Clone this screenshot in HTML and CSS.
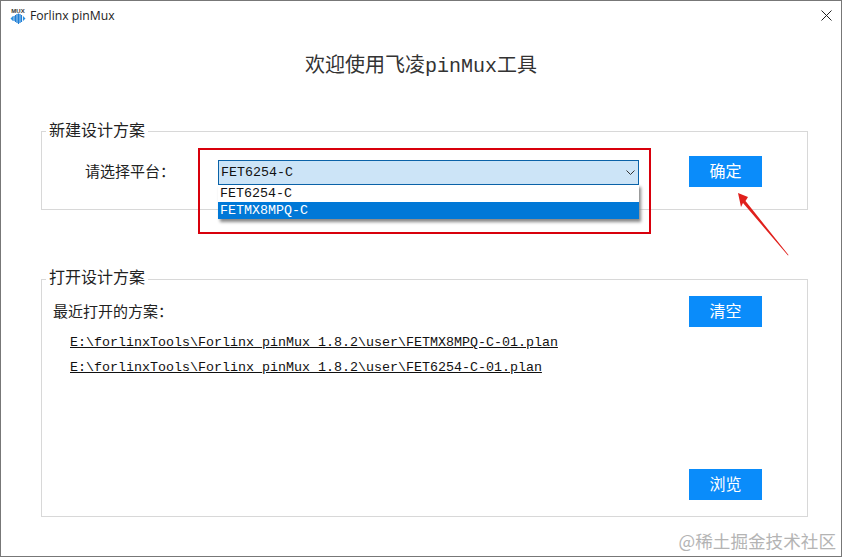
FILE: index.html
```html
<!DOCTYPE html>
<html lang="zh-CN">
<head>
    <meta charset="UTF-8">
    <meta name="viewport" content="width=device-width, initial-scale=1.0">
    <title>Forlinx pinMux</title>
    <link rel="stylesheet" href="styles.css">
</head>
<body>
    <div class="window">
        <div class="titlebar">
            <svg class="app-icon" width="16" height="17" viewBox="0 0 16 17">
                <text x="8" y="5.5" text-anchor="middle" class="app-icon-text">MUX</text>
                <path d="M0.5 11.5 L3 9 V14 Z M15.5 11.5 L13 9 V14 Z" fill="#2a8fe0"/>
                <path d="M4 9 V14 M5.5 8 V15 M7 7 V16 M8.5 6.5 V17 M10 7 V16 M11.5 8 V15" stroke="#1f7fd6" stroke-width="1.2"/>
            </svg>
            <span class="app-name">Forlinx pinMux</span>
            <svg class="close-icon" width="11" height="11" viewBox="0 0 11 11">
                <path d="M0.5 0.5 L10.5 10.5 M10.5 0.5 L0.5 10.5" stroke="#222" stroke-width="1"/>
            </svg>
        </div>

        <h1 class="heading">欢迎使用飞凌pinMux工具</h1>

        <div class="group new-plan">
            <div class="group-title">新建设计方案</div>
            <div class="label platform-label">请选择平台：</div>
            <div class="combo">
                <span>FET6254-C</span>
                <svg width="9" height="5" viewBox="0 0 9 5">
                    <path d="M0.5 0.5 L4.5 4.5 L8.5 0.5" fill="none" stroke="#333" stroke-width="1"/>
                </svg>
                <div class="combo-list">
                    <div class="combo-item">FET6254-C</div>
                    <div class="combo-item selected">FETMX8MPQ-C</div>
                </div>
            </div>
            <div class="btn">确定</div>
        </div>

        <div class="group open-plan">
            <div class="group-title">打开设计方案</div>
            <div class="open-header">
                <div class="label">最近打开的方案：</div>
                <div class="btn">清空</div>
            </div>
            <div class="recent-list">
                <a class="recent-link">E:\forlinxTools\Forlinx_pinMux_1.8.2\user\FETMX8MPQ-C-01.plan</a>
                <a class="recent-link">E:\forlinxTools\Forlinx_pinMux_1.8.2\user\FET6254-C-01.plan</a>
            </div>
            <div class="btn browse">浏览</div>
        </div>

        <!-- annotations drawn on top of the screenshot -->
        <div class="red-frame"></div>
        <svg class="red-arrow" width="60" height="72" viewBox="0 0 60 72">
            <path d="M4 5 L14 9 L11.5 13 L54.5 67 L54 67.5 L9 15 L7 19 Z" fill="#e0201c"/>
        </svg>
        <div class="watermark">@稀土掘金技术社区</div>
    </div>
</body>
</html>
```

FILE: styles.css
```css
html, body {
    margin: 0;
    height: 100%;
    background-color: white;
}

body {
    font-family: "Noto Sans CJK SC", sans-serif;
    color: #111;
}

.window {
    position: relative;
    box-sizing: border-box;
    width: 842px;
    height: 557px;
    border: 1px solid #777;
    display: flex;
    flex-direction: column;
    overflow: hidden;
}

.titlebar {
    height: 29px;
    display: flex;
    align-items: center;
    padding: 0 9px 0 9px;
    flex-shrink: 0;
}

.app-icon {
    margin-right: 4px;
}

.app-icon-text {
    font-family: "Liberation Sans", sans-serif;
    font-size: 6px;
    font-weight: bold;
    fill: #333;
}

.app-name {
    font-family: "Open Sans", sans-serif;
    font-size: 12.2px;
    color: #222;
    flex: 1;
}

.heading {
    margin: 22px 0 0;
    height: 30px;
    line-height: 30px;
    text-align: center;
    font-family: "Liberation Mono", "Noto Sans CJK SC", monospace;
    font-size: 20px;
    font-weight: normal;
    color: #333;
}

/* Group boxes */
.group {
    position: relative;
    box-sizing: border-box;
    margin: 0 33px 0 40px;
    border: 1px solid #d8d8d8;
}

.group-title {
    position: absolute;
    top: -14px;
    left: 4px;
    padding: 0 3px;
    height: 22px;
    line-height: 22px;
    font-size: 16px;
    background-color: white;
    color: #222;
}

.open-plan .group-title {
    top: -15px;
}

.new-plan {
    margin-top: 49px;
    height: 79px;
    display: flex;
    align-items: flex-start;
    padding: 24px 45px 0 43px;
}

.open-plan {
    margin-top: 69px;
    height: 238px;
    display: flex;
    flex-direction: column;
    padding: 16px 45px 16px 11px;
}

.label {
    font-size: 15px;
    line-height: 22px;
    color: #222;
    margin-top: -2px;
}

.platform-label {
    width: 133px;
    margin-top: 4px;
}

/* Buttons */
.btn {
    box-sizing: border-box;
    width: 73px;
    height: 31px;
    line-height: 29px;
    text-align: center;
    font-size: 16px;
    color: white;
    background-color: #0a8cfa;
    flex-shrink: 0;
}

/* Combo box with its list open */
.combo {
    position: relative;
    box-sizing: border-box;
    width: 421px;
    height: 25px;
    margin: 4px 50px 0 0;
    padding: 0 3px 0 2px;
    display: flex;
    align-items: center;
    justify-content: space-between;
    border: 1px solid #0a62a8;
    background-color: #cce4f7;
    font-family: "Liberation Mono", monospace;
    font-size: 13.33px;
}

.combo-list {
    position: absolute;
    top: 23px;
    left: -1px;
    width: 421px;
    box-sizing: border-box;
    border-top: 1px solid #0a62a8;
    background-color: white;
    box-shadow: 2px 3px 3px #888;
    z-index: 1;
}

.combo-item {
    height: 17px;
    line-height: 18px;
    padding-left: 2px;
}

.combo-item.selected {
    background-color: #0078d7;
    color: white;
}

/* Recent files */
.open-header {
    display: flex;
    justify-content: space-between;
    align-items: center;
}

.recent-list {
    display: flex;
    flex-direction: column;
    margin: 3px 0 0 17px;
}

.recent-link {
    height: 25px;
    line-height: 25px;
    font-family: "Liberation Mono", monospace;
    font-size: 13.33px;
    text-decoration: underline;
    color: #111;
}

.browse {
    margin-top: auto;
    align-self: flex-end;
}

/* Annotations */
.red-frame {
    position: absolute;
    left: 197px;
    top: 147px;
    width: 449px;
    height: 82px;
    border: 2px solid #d8000c;
    z-index: 2;
}

.red-arrow {
    position: absolute;
    left: 733px;
    top: 187px;
    z-index: 2;
}

.watermark {
    position: absolute;
    right: 5px;
    bottom: 3px;
    font-size: 17.6px;
    line-height: 24px;
    color: #b4b4b4;
    z-index: 2;
}
```
